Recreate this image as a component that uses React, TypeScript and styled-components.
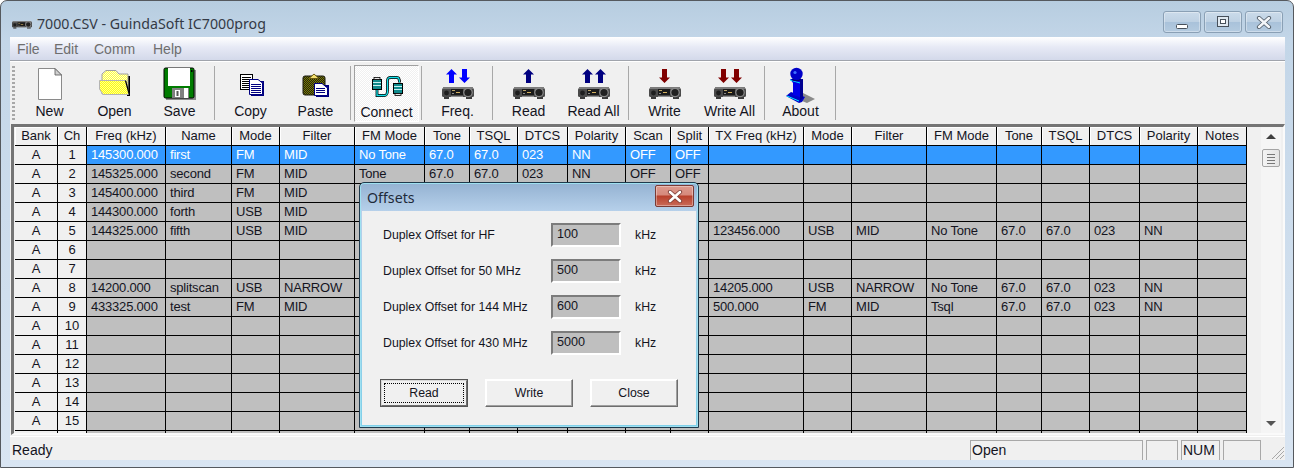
import React from "react";
import styled, { createGlobalStyle } from "styled-components";

const Global = createGlobalStyle`
  html, body { margin: 0; padding: 0; background: #fff; }
  #root { width: 1294px; height: 468px; overflow: hidden; }
  * { box-sizing: border-box; }
`;

const UI = `"Liberation Sans", Arial, sans-serif`;
const CAPTION = `"Noto Sans", "Open Sans", sans-serif`;
const INK = "#14141e";
const COLS = [43, 29, 79, 66, 48, 75, 70, 45, 48, 50, 58, 45, 38, 95, 48, 75, 70, 45, 48, 50, 58, 49];

const Frame = styled.div`
  position: relative;
  width: 1294px;
  height: 468px;
  display: flex;
  flex-direction: column;
  padding: 0 8px 7px 9px;
  border: 1px solid #55595e;
  border-radius: 7px 7px 0 0;
  background: linear-gradient(180deg, #b7cde0 0%, #c3d6e8 40px, #d9e5f2 100%);
  font-family: ${UI};
  color: ${INK};
`;

const TitleBar = styled.div`
  height: 36px;
  flex: none;
  display: flex;
  align-items: center;
  padding-left: 2px;
  position: relative;
`;
const TitleIcon = styled.svg`
  display: block;
  margin-top: 10px;
`;
const TitleText = styled.span`
  margin-left: 5px;
  font: 14.2px ${CAPTION};
  color: #343a46;
  margin-top: 9px;
`;
const CaptionButtons = styled.div`
  margin-left: auto;
  display: flex;
  gap: 3px;
  margin-top: 6px;
  margin-right: 2px;
`;
const CaptionButton = styled.div`
  width: 38px;
  height: 22px;
  border: 1px solid #8aa0b5;
  border-radius: 3px;
  background: linear-gradient(180deg, #cbdbea 0%, #bed1e3 48%, #a9c2da 52%, #b4cbe0 100%);
  box-shadow: inset 0 0 0 1px rgba(255, 255, 255, 0.35);
  display: flex;
  align-items: center;
  justify-content: center;
`;
const MinGlyph = styled.svg`
  display: block;
  margin-top: 8px;
`;

const MenuBar = styled.div`
  height: 24px;
  flex: none;
  display: flex;
  align-items: center;
  background: linear-gradient(180deg, #ffffff 0%, #e6e9f5 45%, #d3d9ea 100%);
  border-bottom: 1px solid #a0a4ac;
`;
const MenuItem = styled.span<{ $w: number }>`
  width: ${(p) => p.$w}px;
  font-size: 14px;
  color: #6e6e6e;
  &:first-child { margin-left: 7px; }
`;

const ToolBar = styled.div`
  height: 63px;
  flex: none;
  display: flex;
  align-items: flex-start;
  padding: 3px 0 0 2px;
  background: #f0f0f0;
  border-top: 1px solid #ffffff;
`;
const Gripper = styled.div`
  width: 3px;
  height: 54px;
  margin: 1px 2px 0 0;
  background: repeating-linear-gradient(180deg, #a8a8a8 0 2px, transparent 2px 4px);
`;
const ToolButton = styled.div<{ $pressed?: boolean }>`
  width: 65px;
  height: 57px;
  display: flex;
  flex-direction: column;
  align-items: center;
  font-size: 14px;
  line-height: 16px;
  ${(p) =>
    p.$pressed
      ? `
    border: 1px solid; border-color: #a0a0a0 #ffffff #ffffff #a0a0a0;
    background: repeating-conic-gradient(#ffffff 0 25%, #f0f0f0 0 50%) 0 0 / 2px 2px;
  `
      : ""}
  svg { display: block; flex: none; overflow: visible; }
`;
const ToolLabel = styled.span`
  white-space: nowrap;
`;
const ToolSep = styled.div`
  width: 1px;
  height: 54px;
  background: #a8a8a8;
  margin: 1px 3px 0 2px;
  flex: none;
`;

const GridArea = styled.div`
  height: 312px;
  flex: none;
  display: flex;
  padding-left: 1px;
  background: #f0f0f0;
`;
const GridFrame = styled.div`
  flex: 1;
  display: flex;
  justify-content: space-between;
  height: 311px;
  border-top: 3px solid #747474;
  border-left: 3px solid #747474;
  border-right: 2px solid #fafafa;
  border-bottom: 2px solid #fafafa;
  padding-left: 1px;
`;
const Sheet = styled.div`
  width: 1232px;
  height: 306px;
  overflow: hidden;
`;
const Row = styled.div`
  display: flex;
  height: 19px;
`;
const Cell = styled.div<{ $w: number; $kind: "head" | "fixed" | "data" | "sel" }>`
  width: ${(p) => p.$w}px;
  flex: none;
  height: 19px;
  border-right: 1px solid #000;
  border-bottom: 1px solid #000;
  line-height: 18px;
  white-space: nowrap;
  overflow: hidden;
  padding-left: ${(p) => (p.$kind === "data" || p.$kind === "sel" ? "4px" : "0")};
  text-align: ${(p) => (p.$kind === "data" || p.$kind === "sel" ? "left" : "center")};
  font-size: 13px;
  letter-spacing: ${(p) => (p.$kind === "data" || p.$kind === "sel" ? "-0.2px" : "0")};
  color: ${(p) => (p.$kind === "sel" ? "#fff" : INK)};
  background: ${(p) =>
    p.$kind === "sel" ? "#3399ff" : p.$kind === "data" ? "#bfbfbf" : "#f0f0f0"};
  box-shadow: ${(p) => (p.$kind === "head" ? "inset 1px 1px 0 #fff" : "none")};
`;

const ScrollBar = styled.div`
  width: 20px;
  height: 306px;
  margin-right: 2px;
  background: #f5f5f5;
  display: flex;
  flex-direction: column;
  align-items: center;
`;
const ArrowUp = styled.div`
  margin-top: 7px;
  width: 0;
  height: 0;
  border: 5px solid transparent;
  border-top: 0;
  border-bottom: 5px solid #404040;
`;
const ArrowDown = styled.div`
  margin-top: auto;
  margin-bottom: 7px;
  width: 0;
  height: 0;
  border: 5px solid transparent;
  border-bottom: 0;
  border-top: 5px solid #555;
`;
const Thumb = styled.div`
  margin-top: 10px;
  width: 18px;
  height: 18px;
  border: 1px solid #a4a4a4;
  border-radius: 2px;
  background: linear-gradient(90deg, #f4f4f4, #e4e4e4);
  display: flex;
  flex-direction: column;
  justify-content: center;
  align-items: center;
  gap: 1px;
  i { display: block; width: 8px; height: 1px; background: #777; margin: 1px 0 0; }
`;

const StatusBar = styled.div`
  flex: 1;
  display: flex;
  align-items: flex-end;
  background: #f0f0f0;
  border-top: 1px solid #fff;
  font-size: 14px;
  padding-left: 2px;
`;
const StatusText = styled.span`
  margin-right: auto;
  line-height: 19px;
`;
const Pane = styled.div<{ $w: number; $mr?: number }>`
  width: ${(p) => p.$w}px;
  height: 20px;
  margin-right: ${(p) => p.$mr ?? 3}px;
  border: solid #a8a8a8;
  border-width: 1px 1px 0 1px;
  line-height: 19px;
  padding-left: 1px;
  white-space: nowrap;
`;
const Grip = styled.svg`
  display: block;
  flex: none;
`;

const Dialog = styled.div`
  position: absolute;
  left: 358px;
  top: 181px;
  width: 340px;
  height: 246px;
  display: flex;
  flex-direction: column;
  padding: 0 2px 2px;
  border: 1px solid #1f3a4d;
  border-radius: 5px 5px 0 0;
  background: linear-gradient(180deg, #94b2d2 0%, #b6d0ea 28px, #7fd0ea 100%);
  box-shadow: inset 0 0 0 1px #9fe0f0;
`;
const DialogHead = styled.div`
  height: 28px;
  flex: none;
  display: flex;
  align-items: center;
  padding-left: 5px;
  font: 14.2px ${CAPTION};
  color: #1e2a3a;
`;
const DialogClose = styled.div`
  margin-left: auto;
  margin-right: 2px;
  margin-top: -2px;
  width: 39px;
  height: 22px;
  border: 1px solid #7a3a34;
  border-radius: 2px;
  background: linear-gradient(180deg, #dc9a8e 0%, #d6897c 45%, #b8402c 50%, #c96a58 100%);
  box-shadow: inset 0 0 0 1px rgba(255, 255, 255, 0.35);
  display: flex;
  align-items: center;
  justify-content: center;
`;
const DialogBody = styled.div`
  flex: 1;
  background: #f0f0f0;
  padding: 12px 18px 0 18px;
  display: flex;
  flex-direction: column;
  font-size: 12.3px;
`;
const FieldRow = styled.div`
  height: 24px;
  margin-bottom: 12px;
  display: flex;
  align-items: center;
  flex: none;
`;
const FieldLabel = styled.span`
  width: 171px;
  padding: 0 0 0 3px;
  white-space: nowrap;
`;
const FieldInput = styled.div`
  width: 70px;
  height: 24px;
  background: #bfbfbf;
  border: 2px solid;
  border-color: #7c7c7c #ffffff #ffffff #7c7c7c;
  padding-left: 4px;
  line-height: 19px;
  font-size: 12.6px;
`;
const FieldUnit = styled.span`
  margin-left: 14px;
`;
const ButtonRow = styled.div`
  display: flex;
  gap: 17px;
  margin-top: 12px;
`;
const DlgButton = styled.div<{ $default?: boolean }>`
  width: 88px;
  height: 28px;
  display: flex;
  align-items: center;
  justify-content: center;
  position: relative;
  background: #f0f0f0;
  border: 1px solid;
  border-color: #ffffff #6e6e6e #6e6e6e #ffffff;
  box-shadow: inset -1px -1px 0 #a0a0a0, inset 1px 1px 0 #ffffff;
  ${(p) =>
    p.$default
      ? `
    outline: 1px solid #555;
    outline-offset: -1px;
    border: 2px solid; border-color: #d8d8d8 #6e6e6e #6e6e6e #d8d8d8;
    box-shadow: inset 0 0 0 1px #f0f0f0;
    &::after { content: ""; position: absolute; inset: 2px; border: 1px dotted #000; }
  `
      : ""}
`;

/* ---------- drawings ---------- */

const Radio = ({ x, y }: { x: number; y: number }) => (
  <g transform={`translate(${x} ${y})`}>
    <rect x="0" y="2" width="32" height="9" rx="1.5" fill="#4a4a4a" />
    <rect x="1" y="1" width="30" height="2" fill="#7c7c7c" />
    <rect x="2" y="11" width="5" height="2" fill="#3a3a3a" />
    <rect x="24" y="11" width="6" height="2" fill="#3a3a3a" />
    <circle cx="4.5" cy="7" r="2.4" fill="#1e1e1e" />
    <rect x="9" y="3" width="12" height="6" fill="#1a1a1a" />
    <rect x="10" y="4" width="3" height="1" fill="#b9a36a" />
    <rect x="14" y="6" width="4" height="1" fill="#d3b060" />
    <rect x="10" y="7" width="2" height="1" fill="#8a8a8a" />
    <rect x="9" y="10" width="12" height="1" fill="#8e8e8e" />
    <circle cx="26" cy="6.5" r="4.8" fill="#8a8a8a" />
    <circle cx="26" cy="6.5" r="3.6" fill="#202020" />
  </g>
);

const Arrow = ({ cx, up, color }: { cx: number; up?: boolean; color: string }) => (
  <polygon
    fill={color}
    points={
      up
        ? `${cx},4 ${cx + 5.5},9.5 ${cx + 2.5},9.5 ${cx + 2.5},18 ${cx - 2.5},18 ${cx - 2.5},9.5 ${cx - 5.5},9.5`
        : `${cx},18 ${cx + 5.5},12.5 ${cx + 2.5},12.5 ${cx + 2.5},4 ${cx - 2.5},4 ${cx - 2.5},12.5 ${cx - 5.5},12.5`
    }
  />
);

const Slot = ({ children }: { children: React.ReactNode }) => (
  <svg width="40" height="38" viewBox="0 0 40 38">
    {children}
  </svg>
);

const Dither = ({ id, a, b }: { id: string; a: string; b: string }) => (
  <pattern id={id} width="2" height="2" patternUnits="userSpaceOnUse">
    <rect width="2" height="2" fill={a} />
    <rect width="1" height="1" fill={b} />
    <rect x="1" y="1" width="1" height="1" fill={b} />
  </pattern>
);

const DocLines = ({ x, y, w, n, color }: { x: number; y: number; w: number; n: number; color: string }) => (
  <g fill={color}>
    {Array.from({ length: n }, (_, i) => (
      <rect key={i} x={x} y={y + i * 2} width={w} height="1" />
    ))}
  </g>
);

const CABLE = "M10 24V29.5H17C20 29.5 20.5 28 20.5 24V15C20.5 12 21.5 11.5 24 11.5H30C32 11.5 32.5 13 32.5 16.5";

const icons: Record<string, React.ReactNode> = {
  New: (
    <Slot>
      <path d="M8.5 3.5H25L31.5 10V34.5H8.5Z" fill="#fff" stroke="#8a8a8a" />
      <path d="M25 3.5V10H31.5Z" fill="#d0d0d0" stroke="#555" strokeWidth="0.8" />
    </Slot>
  ),
  Open: (
    <Slot>
      <defs>
        <Dither id="yel" a="#ffff10" b="#ffff90" />
        <Dither id="yel2" a="#ffff40" b="#ffffd0" />
      </defs>
      <path d="M34 11V30H32" fill="none" stroke="#000" strokeWidth="2" />
      <path d="M7 16V9L11 5.5H21L24 9H33V29H7Z" fill="url(#yel2)" stroke="#a0a0a0" />
      <path d="M4.5 15.5H30.5L34 29.5H8L4.5 24Z" fill="url(#yel)" stroke="#b4b4b4" />
      <path d="M30.5 15.5L34.5 30" fill="none" stroke="#000" strokeWidth="1.2" />
    </Slot>
  ),
  Save: (
    <Slot>
      <rect x="6" y="5" width="30" height="30" fill="#8c8c8c" />
      <rect x="4" y="3" width="30" height="30" rx="1.5" fill="#007c00" stroke="#000" />
      <rect x="8" y="3" width="22" height="18" fill="#fff" />
      <rect x="31" y="5" width="1.5" height="2" fill="#000" />
      <rect x="12" y="23" width="17" height="10" fill="#808080" />
      <rect x="15" y="25" width="5" height="7" fill="#fff" />
      <rect x="16.5" y="26" width="2" height="5" fill="#555" />
      <rect x="24" y="23" width="4" height="10" fill="#fff" />
    </Slot>
  ),
  Copy: (
    <Slot>
      <rect x="9.5" y="9.5" width="12" height="15" fill="#fff" stroke="#000" />
      <DocLines x={11} y={12} w={9} n={6} color="#000" />
      <rect x="20" y="16" width="13" height="15" fill="#000080" />
      <path d="M18.5 14.5H27L31.5 18V29.5H18.5Z" fill="#fff" stroke="#000080" />
      <DocLines x={20} y={19} w={10} n={5} color="#000080" />
    </Slot>
  ),
  Paste: (
    <Slot>
      <defs>
        <Dither id="olv" a="#7a7a00" b="#232310" />
      </defs>
      <rect x="7" y="11" width="22" height="19" rx="2" fill="url(#olv)" stroke="#1a1a10" />
      <path d="M13 13.5L18 9L23 13.5Z" fill="#f4e070" stroke="#6a5a10" />
      <rect x="20" y="20" width="13" height="12" fill="#000080" />
      <path d="M18.5 18.5H26L31.5 23V30.5H18.5Z" fill="#fff" stroke="#000080" />
      <DocLines x={20} y={23} w={9} n={3} color="#000080" />
    </Slot>
  ),
  Connect: (
    <Slot>
      <path d={CABLE} fill="none" stroke="#000" strokeWidth="2.8" />
      <path d={CABLE} fill="none" stroke="#12e0e8" strokeWidth="1.3" />
      <rect x="5.5" y="13.5" width="9" height="10" fill="#0f8a8c" stroke="#000" />
      <path d="M6 16.5h8M6 19.5h8" stroke="#c8f0f0" strokeWidth="1" />
      <rect x="7" y="11.5" width="6" height="2" fill="#e8e8e8" stroke="#000" strokeWidth="0.8" />
      <rect x="26.5" y="17.5" width="9" height="10" fill="#0f8a8c" stroke="#000" />
      <path d="M27 20.5h8M27 23.5h8" stroke="#c8f0f0" strokeWidth="1" />
      <rect x="28" y="27.5" width="6" height="2" fill="#e8e8e8" stroke="#000" strokeWidth="0.8" />
    </Slot>
  ),
  "Freq.": (
    <Slot>
      <Arrow cx={13.5} up color="#0000ff" />
      <Arrow cx={26.5} color="#0000ff" />
      <Radio x={4} y={21} />
    </Slot>
  ),
  Read: (
    <Slot>
      <Arrow cx={19.5} up color="#000080" />
      <Radio x={4} y={21} />
    </Slot>
  ),
  "Read All": (
    <Slot>
      <Arrow cx={13.5} up color="#000080" />
      <Arrow cx={26.5} up color="#000080" />
      <Radio x={4} y={21} />
    </Slot>
  ),
  Write: (
    <Slot>
      <Arrow cx={19.5} color="#800000" />
      <Radio x={4} y={21} />
    </Slot>
  ),
  "Write All": (
    <Slot>
      <Arrow cx={13.5} color="#800000" />
      <Arrow cx={26.5} color="#800000" />
      <Radio x={4} y={21} />
    </Slot>
  ),
  About: (
    <Slot>
      <polygon points="22,28 34,34 26,38 21,36" fill="#8a8a8a" />
      <polygon points="5,31 10,27 24,32 21,37 18,38" fill="#0000c8" />
      <polygon points="9,14 22,14 22,33 12,30 12,18" fill="#0000e8" />
      <polygon points="19,15 22,14 22,33 19,36" fill="#000090" />
      <path d="M9 15L19 18M6 31L18 36" stroke="#00e8ff" strokeWidth="1" fill="none" />
      <circle cx="15.5" cy="9" r="6.2" fill="#0000c8" />
      <circle cx="14" cy="7.5" r="1.6" fill="#3f6fff" />
      <path d="M11 14.5C14 16 18 16 20 14" stroke="#000070" strokeWidth="1.4" fill="none" />
    </Slot>
  ),
};

type Tool = { label: string } | { sep: true };
const tools: Tool[] = [
  { label: "New" }, { label: "Open" }, { label: "Save" }, { sep: true },
  { label: "Copy" }, { label: "Paste" }, { sep: true },
  { label: "Connect" }, { sep: true },
  { label: "Freq." }, { sep: true },
  { label: "Read" }, { label: "Read All" }, { sep: true },
  { label: "Write" }, { label: "Write All" }, { sep: true },
  { label: "About" }, { sep: true },
];

const HEAD = ["Bank","Ch","Freq (kHz)","Name","Mode","Filter","FM Mode","Tone","TSQL","DTCS","Polarity","Scan","Split","TX Freq (kHz)","Mode","Filter","FM Mode","Tone","TSQL","DTCS","Polarity","Notes"];
const S = (...a: string[]) => a;
const E = "";
const rows: string[][] = [
  S("145300.000","first","FM","MID","No Tone","67.0","67.0","023","NN","OFF","OFF"),
  S("145325.000","second","FM","MID","Tone","67.0","67.0","023","NN","OFF","OFF"),
  S("145400.000","third","FM","MID"),
  S("144300.000","forth","USB","MID"),
  S("144325.000","fifth","USB","MID",E,E,E,E,E,E,E,"123456.000","USB","MID","No Tone","67.0","67.0","023","NN"),
  S(),
  S(),
  S("14200.000","splitscan","USB","NARROW",E,E,E,E,E,E,E,"14205.000","USB","NARROW","No Tone","67.0","67.0","023","NN"),
  S("433325.000","test","FM","MID",E,E,E,E,E,E,E,"500.000","FM","MID","Tsql","67.0","67.0","023","NN"),
  S(), S(), S(), S(), S(), S(), S(),
];

const fields = [
  ["Duplex Offset for HF", "100"],
  ["Duplex Offset for 50 MHz", "500"],
  ["Duplex Offset for 144 MHz", "600"],
  ["Duplex Offset for 430 MHz", "5000"],
];

export default function App() {
  return (
    <>
      <Global />
      <Frame>
        <TitleBar>
          <TitleIcon width="20" height="9" viewBox="0 0 32 13">
            <Radio x={0} y={0} />
          </TitleIcon>
          <TitleText>7000.CSV - GuindaSoft IC7000prog</TitleText>
          <CaptionButtons>
            <CaptionButton>
              <MinGlyph width="14" height="7" viewBox="0 0 14 7">
                <rect x="1.5" y="1.5" width="11" height="4" rx="1" fill="#fff" stroke="#47505a" />
              </MinGlyph>
            </CaptionButton>
            <CaptionButton>
              <svg width="14" height="12" viewBox="0 0 14 12">
                <rect x="1.5" y="0.5" width="11" height="10" fill="#dfe8f0" stroke="#47505a" />
                <rect x="4.5" y="3.5" width="5" height="4" fill="#fff" stroke="#47505a" />
              </svg>
            </CaptionButton>
            <CaptionButton>
              <svg width="16" height="13" viewBox="0 0 16 13">
                <path d="M3 2L13 11M13 2L3 11" stroke="#55606c" strokeWidth="4.2" strokeLinecap="round" />
                <path d="M3 2L13 11M13 2L3 11" stroke="#f4f7fa" strokeWidth="2.4" strokeLinecap="round" />
              </svg>
            </CaptionButton>
          </CaptionButtons>
        </TitleBar>

        <MenuBar>
          <MenuItem $w={37}>File</MenuItem>
          <MenuItem $w={40}>Edit</MenuItem>
          <MenuItem $w={59}>Comm</MenuItem>
          <MenuItem $w={40}>Help</MenuItem>
        </MenuBar>

        <ToolBar>
          <Gripper />
          {tools.map((t, i) =>
            "sep" in t ? (
              <ToolSep key={i} />
            ) : (
              <ToolButton key={i} $pressed={t.label === "Connect"}>
                {icons[t.label]}
                <ToolLabel>{t.label}</ToolLabel>
              </ToolButton>
            )
          )}
        </ToolBar>

        <GridArea>
          <GridFrame>
            <Sheet>
              <Row>
                {HEAD.map((h, i) => (
                  <Cell key={i} $w={COLS[i]} $kind="head">{h}</Cell>
                ))}
              </Row>
              {rows.map((r, ri) => (
                <Row key={ri}>
                  <Cell $w={COLS[0]} $kind="fixed">{ri < 15 ? "A" : ""}</Cell>
                  <Cell $w={COLS[1]} $kind="fixed">{ri < 15 ? ri + 1 : ""}</Cell>
                  {COLS.slice(2).map((w, ci) => (
                    <Cell key={ci} $w={w} $kind={ri === 0 ? "sel" : "data"}>{r[ci] ?? ""}</Cell>
                  ))}
                </Row>
              ))}
            </Sheet>
            <ScrollBar>
              <ArrowUp />
              <Thumb><i /><i /><i /><i /></Thumb>
              <ArrowDown />
            </ScrollBar>
          </GridFrame>
        </GridArea>

        <StatusBar>
          <StatusText>Ready</StatusText>
          <Pane $w={173}>Open</Pane>
          <Pane $w={32} />
          <Pane $w={39}>NUM</Pane>
          <Pane $w={38} $mr={10} />
          <Grip width="14" height="14" viewBox="0 0 14 14">
            <path d="M13 1L1 13M13 5L5 13M13 9L9 13" stroke="#a8a8a8" strokeWidth="1" />
          </Grip>
        </StatusBar>

        <Dialog>
          <DialogHead>
            Offsets
            <DialogClose>
              <svg width="16" height="13" viewBox="0 0 16 13">
                <path d="M3 2L13 11M13 2L3 11" stroke="#7a3a34" strokeWidth="4.2" strokeLinecap="round" />
                <path d="M3 2L13 11M13 2L3 11" stroke="#fff" strokeWidth="2.6" strokeLinecap="round" />
              </svg>
            </DialogClose>
          </DialogHead>
          <DialogBody>
            {fields.map(([l, v]) => (
              <FieldRow key={l}>
                <FieldLabel>{l}</FieldLabel>
                <FieldInput>{v}</FieldInput>
                <FieldUnit>kHz</FieldUnit>
              </FieldRow>
            ))}
            <ButtonRow>
              <DlgButton $default>Read</DlgButton>
              <DlgButton>Write</DlgButton>
              <DlgButton>Close</DlgButton>
            </ButtonRow>
          </DialogBody>
        </Dialog>
      </Frame>
    </>
  );
}
